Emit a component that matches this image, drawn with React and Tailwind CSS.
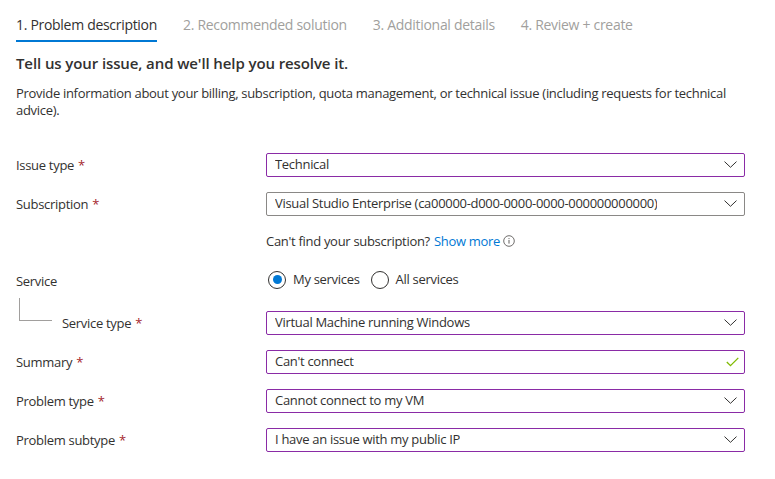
import { useState } from "react";

const font = { fontFamily: '"Segoe UI", "Open Sans", "Liberation Sans", sans-serif' };

function Chevron() {
  return (
    <svg width="13" height="7" viewBox="0 0 13 7" className="shrink-0 mr-[7px]">
      <path d="M0.5 0.6 L6.5 6.3 L12.5 0.6" fill="none" stroke="#323130" strokeWidth="1" />
    </svg>
  );
}

function Check() {
  return (
    <svg width="13" height="10" viewBox="0 0 13 10" className="shrink-0 mr-[5px]">
      <path d="M0.8 5 L4.5 8.7 L12.3 0.9" fill="none" stroke="#7fba00" strokeWidth="1.3" />
    </svg>
  );
}

function Label({ text, required }) {
  return (
    <div className="text-[13px] tracking-[-0.3px] text-[#323130] pt-[2px]">
      {text}
      {required && <span className="text-[#a4262c] ml-1">*</span>}
    </div>
  );
}

function Field({ value, modified = true, check = false }) {
  return (
    <div
      className={
        "h-6 flex items-center justify-between pl-2 border text-[13px] tracking-[-0.3px] text-[#323130] rounded-[2px] " +
        (modified ? "border-[#8a2ba6]" : "border-[#8a8886]")
      }
    >
      <span className="truncate">{value}</span>
      {check ? <Check /> : <Chevron />}
    </div>
  );
}

function Row({ label, required, children }) {
  return (
    <div className="grid grid-cols-[250px_1fr] items-center">
      <Label text={label} required={required} />
      {children}
    </div>
  );
}

export default function App() {
  const [tab] = useState(0);
  const [scope, setScope] = useState("mine");
  const tabs = [
    "1. Problem description",
    "2. Recommended solution",
    "3. Additional details",
    "4. Review + create",
  ];

  return (
    <div className="w-[775px] h-[479px] bg-white overflow-hidden" style={font}>
      <div className="w-[729px] ml-4">
        {/* tabs */}
        <div className="flex gap-[26px] pt-[14px]">
          {tabs.map((t, i) => (
            <div
              key={t}
              className={
                "text-[14px] tracking-[-0.3px] pb-[5px] border-b-2 " +
                (i === tab
                  ? "text-[#323130] border-[#0078d4]"
                  : "text-[#a19f9d] border-transparent")
              }
            >
              {t}
            </div>
          ))}
        </div>

        <h2 className="mt-[10px] text-[15px] tracking-[-0.1px] font-semibold text-[#323130]">
          Tell us your issue, and we'll help you resolve it.
        </h2>
        <p className="mt-[10px] text-[13px] tracking-[-0.3px] leading-[17px] text-[#323130]">
          Provide information about your billing, subscription, quota management, or technical
          issue (including requests for technical advice).
        </p>

        <div className="mt-[34px] flex flex-col gap-[15px]">
          <Row label="Issue type" required>
            <Field value="Technical" />
          </Row>
          <Row label="Subscription" required>
            <Field value="Visual Studio Enterprise (ca00000-d000-0000-0000-000000000000)" modified={false} />
          </Row>
        </div>

        <div className="ml-[250px] mt-[16px] text-[13px] tracking-[-0.3px] text-[#323130] flex items-center">
          Can't find your subscription?
          <span className="text-[#0078d4] ml-1">Show more</span>
          <svg width="12" height="12" viewBox="0 0 12 12" className="ml-[3px]">
            <circle cx="6" cy="6" r="5.3" fill="none" stroke="#605e5c" strokeWidth="0.9" />
            <rect x="5.5" y="5" width="1" height="3.6" fill="#605e5c" />
            <rect x="5.5" y="3.1" width="1" height="1" fill="#605e5c" />
          </svg>
        </div>

        <div className="grid grid-cols-[250px_1fr] mt-[17px]">
          <div className="text-[13px] tracking-[-0.3px] text-[#323130] pt-[4px]">Service</div>
          <div className="flex items-center gap-[6px] text-[13px] tracking-[-0.3px] text-[#323130]">
            {[
              ["mine", "My services"],
              ["all", "All services"],
            ].map(([k, l]) => (
              <label key={k} className="flex items-center gap-[7px] mr-[3px]" onClick={() => setScope(k)}>
                <span className="ml-[2px] w-[18px] h-[18px] rounded-full border border-[#323130] flex items-center justify-center">
                  {scope === k && <span className="w-[9px] h-[9px] rounded-full bg-[#0078d4]" />}
                </span>
                {l}
              </label>
            ))}
          </div>
        </div>

        {/* service type, with the tree connector from Service */}
        <div className="grid grid-cols-[250px_1fr] mt-[19px]">
          <div className="flex items-start h-6">
            <div className="ml-[3px] -mt-[13px] w-[33px] h-[23px] border-l border-b border-[#a19f9d]" />
            <div className="ml-[10px] self-center">
              <Label text="Service type" required />
            </div>
          </div>
          <Field value="Virtual Machine running Windows" />
        </div>

        <div className="mt-[15px] flex flex-col gap-[15px]">
          <Row label="Summary" required>
            <Field value="Can't connect" check />
          </Row>
          <Row label="Problem type" required>
            <Field value="Cannot connect to my VM" />
          </Row>
          <Row label="Problem subtype" required>
            <Field value="I have an issue with my public IP" />
          </Row>
        </div>
      </div>
    </div>
  );
}
